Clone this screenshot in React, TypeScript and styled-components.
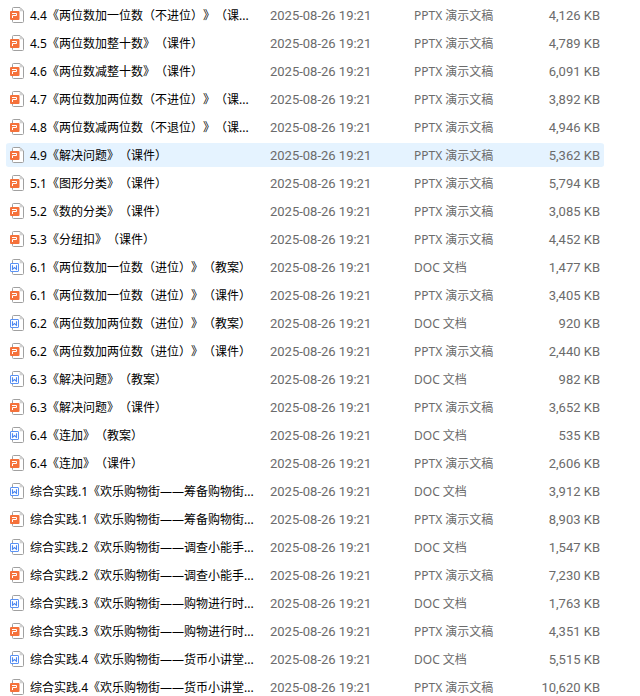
import React from "react";
import styled, { createGlobalStyle } from "styled-components";

const GlobalStyle = createGlobalStyle`
  * { box-sizing: border-box; }
  body {
    margin: 0;
    background: #ffffff;
    font-family: "Noto Sans", "Noto Sans CJK SC", sans-serif;
    font-size: 12px;
    line-height: 20px;
  }
`;

const FileList = styled.main`
  padding: 1px 36px 0 6px;
`;

const Table = styled.table`
  width: 100%;
  table-layout: fixed;
  border-spacing: 0;
  text-spacing-trim: space-all;
`;

const Column = styled.col<{ $width?: number }>`
  width: ${({ $width }) => ($width ? `${$width}px` : "auto")};
`;

const Cell = styled.td`
  height: 28px;
  padding: 2px 0 0;
  border: 0 solid transparent;
  border-width: 2px 0;
  background-clip: padding-box;
  color: #6b6b6b;
  white-space: nowrap;
  overflow: hidden;
`;

const NameCell = styled(Cell)`
  padding: 0 0 0 4px;
  color: #000000;
`;

const NumericCell = styled(Cell)`
  font-family: Roboto, sans-serif;
  font-size: 13px;
`;

const SizeCell = styled(NumericCell)`
  padding-right: 4px;
  text-align: right;
`;

const Row = styled.tr<{ $active: boolean }>`
  ${Cell} {
    background-color: ${({ $active }) => ($active ? "#e5f3ff" : "transparent")};
  }
  ${Cell}:first-child { border-radius: 4px 0 0 4px; }
  ${Cell}:last-child { border-radius: 0 4px 4px 0; }
`;

const FileName = styled.div`
  display: flex;
  align-items: center;
  gap: 6px;
`;

const Label = styled.span`
  padding-top: 2px;
`;

const Icon = styled.svg`
  flex: none;
  width: 14px;
  height: 16px;
`;

type Kind = "doc" | "ppt";

function FileIcon({ kind }: { kind: Kind }) {
  return (
    <Icon viewBox="0 0 14 16" aria-hidden="true">
      <path
        d="M3.5 .5H10L13.5 4V14.5Q13.5 15.5 12.5 15.5H3.5Q2.5 15.5 2.5 14.5V1.5Q2.5 .5 3.5 .5Z"
        fill="#fff"
        stroke="#a0a0a0"
      />
      <path d="M10 1V4H13Z" fill="#d8d8d8" stroke="#c4c4c4" strokeWidth=".5" />
      {kind === "ppt" ? (
        <>
          <rect x="0" y="4" width="9.5" height="9" rx="1" fill="#f5713a" />
          <path d="M2.5 11V8.5H6.5V6.5H2" fill="none" stroke="#fff" strokeWidth="1" />
        </>
      ) : (
        <>
          <rect x=".5" y="4.5" width="8" height="8" rx=".5" fill="#fff" stroke="#5b93f5" />
          <path d="M2.5 6.3V10.3L4.5 8.5L6.5 10.3V6.3" fill="none" stroke="#4c87f0" strokeWidth="1.1" />
        </>
      )}
    </Icon>
  );
}

type Entry = { name: string; kind: Kind; size: string; active?: boolean };

const MODIFIED = "2025-08-26 19:21";

const files: Entry[] = [
  { name: "4.4《两位数加一位数（不进位）》（课...", kind: "ppt", size: "4,126 KB" },
  { name: "4.5《两位数加整十数》（课件）", kind: "ppt", size: "4,789 KB" },
  { name: "4.6《两位数减整十数》（课件）", kind: "ppt", size: "6,091 KB" },
  { name: "4.7《两位数加两位数（不进位）》（课...", kind: "ppt", size: "3,892 KB" },
  { name: "4.8《两位数减两位数（不退位）》（课...", kind: "ppt", size: "4,946 KB" },
  { name: "4.9《解决问题》（课件）", kind: "ppt", size: "5,362 KB", active: true },
  { name: "5.1《图形分类》（课件）", kind: "ppt", size: "5,794 KB" },
  { name: "5.2《数的分类》（课件）", kind: "ppt", size: "3,085 KB" },
  { name: "5.3《分纽扣》（课件）", kind: "ppt", size: "4,452 KB" },
  { name: "6.1《两位数加一位数（进位）》（教案）", kind: "doc", size: "1,477 KB" },
  { name: "6.1《两位数加一位数（进位）》（课件）", kind: "ppt", size: "3,405 KB" },
  { name: "6.2《两位数加两位数（进位）》（教案）", kind: "doc", size: "920 KB" },
  { name: "6.2《两位数加两位数（进位）》（课件）", kind: "ppt", size: "2,440 KB" },
  { name: "6.3《解决问题》（教案）", kind: "doc", size: "982 KB" },
  { name: "6.3《解决问题》（课件）", kind: "ppt", size: "3,652 KB" },
  { name: "6.4《连加》（教案）", kind: "doc", size: "535 KB" },
  { name: "6.4《连加》（课件）", kind: "ppt", size: "2,606 KB" },
  { name: "综合实践.1《欢乐购物街——筹备购物街...", kind: "doc", size: "3,912 KB" },
  { name: "综合实践.1《欢乐购物街——筹备购物街...", kind: "ppt", size: "8,903 KB" },
  { name: "综合实践.2《欢乐购物街——调查小能手...", kind: "doc", size: "1,547 KB" },
  { name: "综合实践.2《欢乐购物街——调查小能手...", kind: "ppt", size: "7,230 KB" },
  { name: "综合实践.3《欢乐购物街——购物进行时...", kind: "doc", size: "1,763 KB" },
  { name: "综合实践.3《欢乐购物街——购物进行时...", kind: "ppt", size: "4,351 KB" },
  { name: "综合实践.4《欢乐购物街——货币小讲堂...", kind: "doc", size: "5,515 KB" },
  { name: "综合实践.4《欢乐购物街——货币小讲堂...", kind: "ppt", size: "10,620 KB" },
];

const typeNames: Record<Kind, string> = { doc: "DOC 文档", ppt: "PPTX 演示文稿" };

export default function App() {
  return (
    <FileList>
      <GlobalStyle />
      <Table lang="zh-CN">
        <colgroup>
          <Column $width={264} />
          <Column $width={144} />
          <Column $width={100} />
          <Column />
        </colgroup>
        <tbody>
          {files.map((file) => (
            <Row key={file.name + file.kind} $active={Boolean(file.active)}>
              <NameCell>
                <FileName>
                  <FileIcon kind={file.kind} />
                  <Label>{file.name}</Label>
                </FileName>
              </NameCell>
              <NumericCell>{MODIFIED}</NumericCell>
              <Cell>{typeNames[file.kind]}</Cell>
              <SizeCell>{file.size}</SizeCell>
            </Row>
          ))}
        </tbody>
      </Table>
    </FileList>
  );
}
